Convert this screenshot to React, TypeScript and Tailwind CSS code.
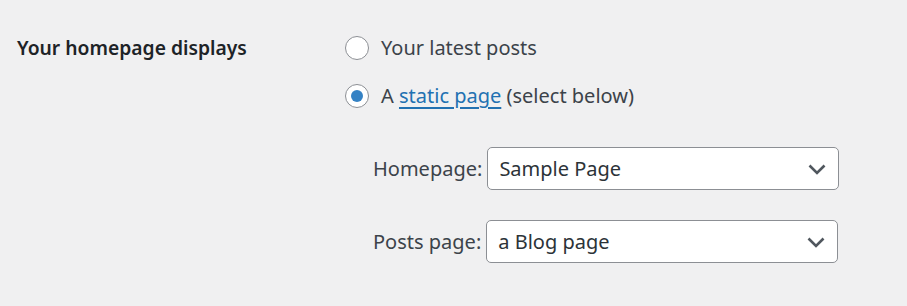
import { useState } from "react";

function Radio({ checked, onChange }: { checked: boolean; onChange: () => void }) {
  return (
    <button
      type="button"
      onClick={onChange}
      className="flex h-[24px] w-[24px] shrink-0 items-center justify-center rounded-full border border-[#8c8f94] bg-white"
    >
      {checked && <span className="h-[12px] w-[12px] rounded-full bg-[#3582c4]" />}
    </button>
  );
}

function Select({ value, options }: { value: string; options: string[] }) {
  return (
    <div className="relative">
      <select
        defaultValue={value}
        className="h-[43px] w-[352px] appearance-none rounded-[5px] border border-[#8c8f94] bg-white pl-[11px] pr-[40px] text-[20px] text-[#2c3338] outline-none"
      >
        {options.map((o) => (
          <option key={o}>{o}</option>
        ))}
      </select>
      <svg
        className="pointer-events-none absolute right-[12px] top-1/2 -translate-y-1/2"
        width="20"
        height="12"
        viewBox="0 0 20 12"
        fill="none"
      >
        <path d="M2.5 2.5l7.5 7.5 7.5-7.5" stroke="#50575e" strokeWidth="2.6" />
      </svg>
    </div>
  );
}

export default function App() {
  const [mode, setMode] = useState<"posts" | "page">("page");

  return (
    <div className="min-h-[306px] w-full bg-[#f0f0f1] pt-[24px] font-['Noto_Sans',sans-serif] text-[20px] text-[#3c434a]">
      <div className="flex">
        <div className="flex h-[48px] w-[345px] shrink-0 items-center pl-[17px] text-[19.3px] font-semibold text-[#1d2327]">
          Your homepage displays
        </div>
        <div className="flex flex-col">
          <label className="flex h-[48px] items-center gap-[12px]">
            <Radio checked={mode === "posts"} onChange={() => setMode("posts")} />
            <span>Your latest posts</span>
          </label>
          <label className="flex h-[48px] items-center gap-[12px]">
            <Radio checked={mode === "page"} onChange={() => setMode("page")} />
            <span>
              A{" "}
              <a href="#" className="text-[#2271b1] underline decoration-[1.5px] underline-offset-[4px]">
                static page
              </a>{" "}
              (select below)
            </span>
          </label>

          <div className="mt-[27px] flex flex-col gap-[30px] pl-[28px]">
            <div className="flex items-center gap-[5px]">
              <span>Homepage:</span>
              <Select value="Sample Page" options={["Sample Page", "a Blog page"]} />
            </div>
            <div className="flex items-center gap-[5px]">
              <span>Posts page:</span>
              <Select value="a Blog page" options={["Sample Page", "a Blog page"]} />
            </div>
          </div>
        </div>
      </div>
    </div>
  );
}
